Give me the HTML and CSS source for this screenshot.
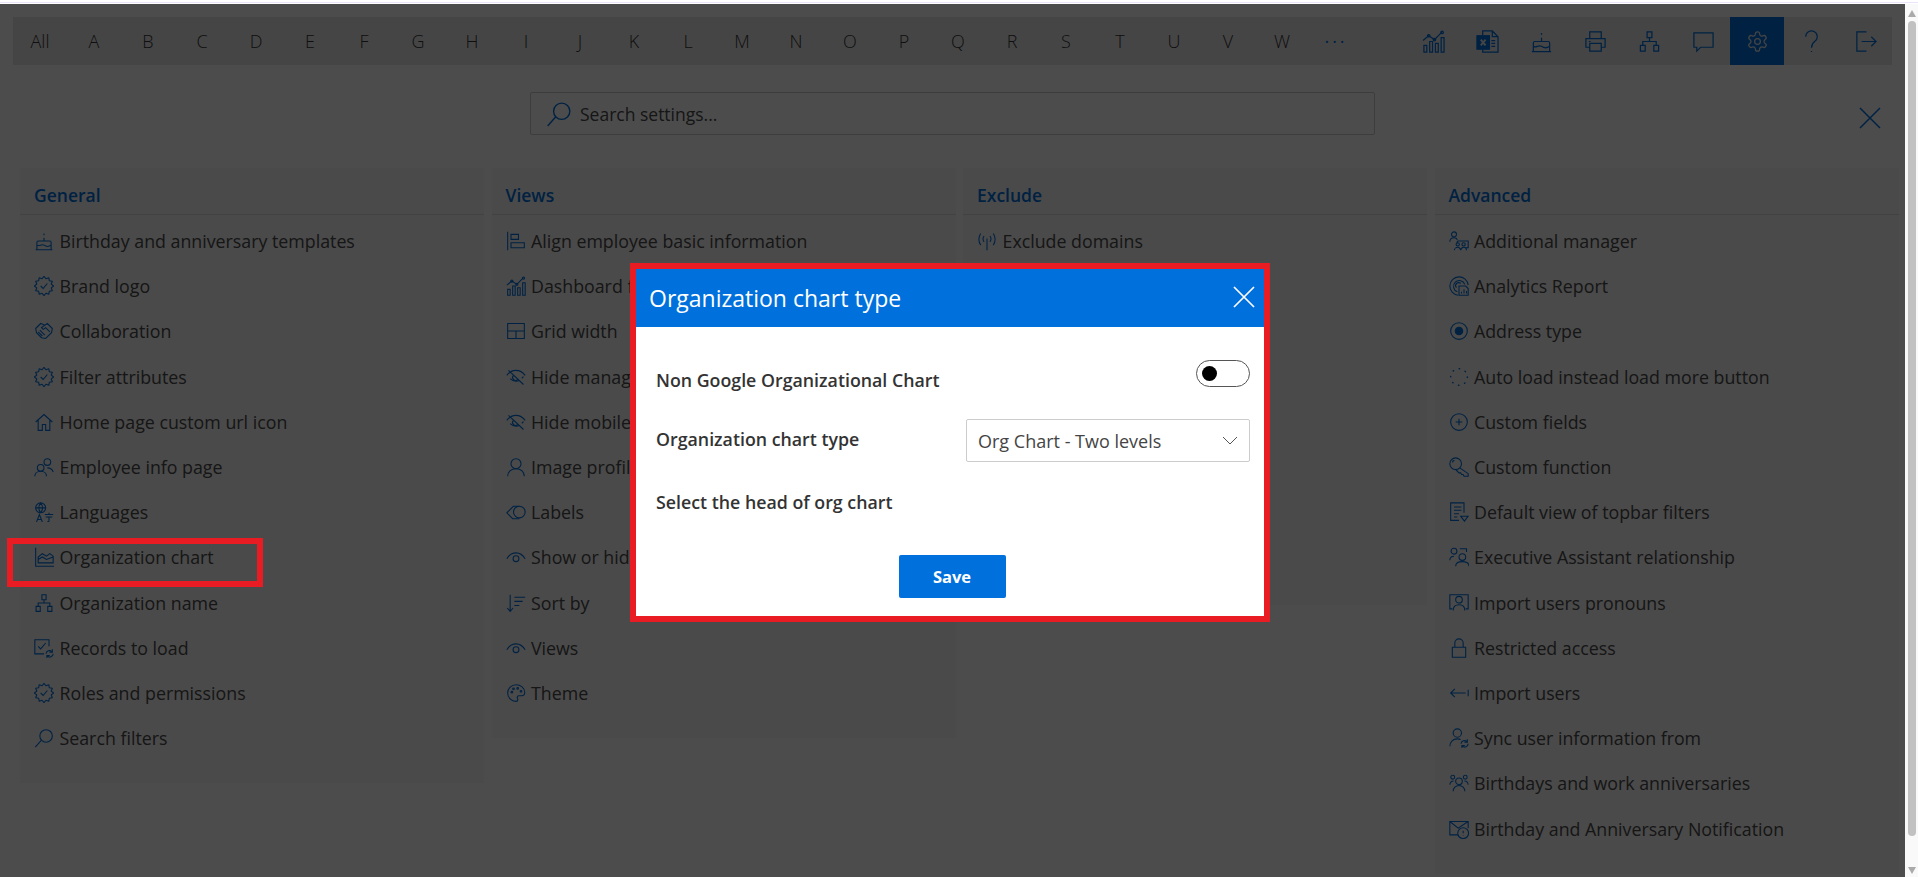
FILE: index.html
```html
<!DOCTYPE html>
<html lang="en">
<head>
  <meta charset="UTF-8">
  <title>Settings</title>
  <link rel="stylesheet" href="styles.css">
</head>
<body>
  <svg class="sprite" xmlns="http://www.w3.org/2000/svg">
    <symbol id="i-bars" viewBox="0 0 24 24"><path d="M2 23v-7h3v7zM8 23V12h3v11zM14 23v-9h3v9zM20 23V8h3v15zM1 11l6-5 6 4 8-8"/><circle cx="7" cy="6" r="1.3"/><circle cx="13" cy="10" r="1.3"/><circle cx="21" cy="2.500" r="1.300"/></symbol>
    <symbol id="i-excel" viewBox="0 0 24 24"><path d="M7 6V1h10l6 6v16H7v-3M17 1v6h6M16 11h4M16 14h4M16 17h4"/><rect x="1" y="6" width="13" height="14" fill="currentColor"/><path class="i-x" d="M5 10l5 6M10 10l-5 6"/></symbol>
    <symbol id="i-cake" viewBox="0 0 24 24"><path d="M2 22.500h20M3.500 22.500v-9a1.500 1.500 0 0 1 1.500-1.500h14a1.500 1.500 0 0 1 1.500 1.500v9M3.500 17c2.800 2 5.700-2 8.500 0s5.700 2 8.500 0M12 12V8M12 3v2"/></symbol>
    <symbol id="i-print" viewBox="0 0 24 24"><path d="M6 9V2h12v7M6 18H2V9h20v9h-4M6 14h12v8H6zM5 12h2"/></symbol>
    <symbol id="i-org" viewBox="0 0 24 24"><path d="M9.500 2h5v6h-5zM2.500 16h5v6h-5zM16.500 16h5v6h-5zM12 8v4M5 16v-4h14v4"/></symbol>
    <symbol id="i-chat" viewBox="0 0 24 24"><path d="M2 3h20v15H9l-4 4v-4H2z"/></symbol>
    <symbol id="i-gear" viewBox="0 0 24 24"><path d="M12.220 2h-.44a2 2 0 0 0-2 2v.18a2 2 0 0 1-1 1.730l-.43.25a2 2 0 0 1-2 0l-.15-.08a2 2 0 0 0-2.730.73l-.22.38a2 2 0 0 0 .73 2.730l.15.1a2 2 0 0 1 1 1.720v.51a2 2 0 0 1-1 1.740l-.15.09a2 2 0 0 0-.73 2.730l.22.38a2 2 0 0 0 2.730.73l.15-.08a2 2 0 0 1 2 0l.43.25a2 2 0 0 1 1 1.730V20a2 2 0 0 0 2 2h.44a2 2 0 0 0 2-2v-.18a2 2 0 0 1 1-1.730l.43-.25a2 2 0 0 1 2 0l.15.08a2 2 0 0 0 2.730-.73l.22-.39a2 2 0 0 0-.73-2.730l-.15-.08a2 2 0 0 1-1-1.740v-.5a2 2 0 0 1 1-1.740l.15-.09a2 2 0 0 0 .73-2.730l-.22-.38a2 2 0 0 0-2.730-.73l-.15.08a2 2 0 0 1-2 0l-.43-.25a2 2 0 0 1-1-1.730V4a2 2 0 0 0-2-2z"/><circle cx="12" cy="12" r="3"/></symbol>
    <symbol id="i-help" viewBox="0 0 24 24"><path d="M6 7a6 6 0 1 1 9.500 4.800c-2.300 1.800-3.500 3.500-3.500 6.700M12 22v1"/></symbol>
    <symbol id="i-out" viewBox="0 0 24 24"><path d="M13 2H3v20h10M8 12h15M18 7l5 5-5 5"/></symbol>
    <symbol id="i-search" viewBox="0 0 24 24"><circle cx="14.500" cy="9.500" r="7.500"/><path d="M9 14.500L1.500 23"/></symbol>
    <symbol id="i-badge" viewBox="0 0 24 24"><path class="i-round" d="M23.500 12L20.690 14.330 21.960 17.750 18.360 18.360 17.750 21.960 14.330 20.690 12 23.500 9.670 20.690 6.250 21.960 5.640 18.360 2.040 17.750 3.310 14.330.5 12 3.310 9.670 2.040 6.250 5.640 5.640 6.250 2.040 9.670 3.310 12 .5 14.330 3.310 17.750 2.040 18.360 5.640 21.960 6.250 20.690 9.670z"/><path d="M8 12l3 3 5-6"/></symbol>
    <symbol id="i-shake" viewBox="0 0 24 24"><path d="M2 9l6-6 5 2 3-2 6 6-1 5-7 7-5-1-6-6zM13 5L9 8l2 2 3-2 5 5M7 11l6 6M5 13l5 5"/></symbol>
    <symbol id="i-home" viewBox="0 0 24 24"><path d="M2 12l10-9 10 9M5 10v12h5v-7h4v7h5V10"/></symbol>
    <symbol id="i-people" viewBox="0 0 24 24"><circle cx="16" cy="6" r="4"/><circle cx="8" cy="13" r="4"/><path d="M1 23c0-3.500 3-6 7-6s7 2.500 7 6M16 13c3.500 0 6 1.500 7 5"/></symbol>
    <symbol id="i-lang" viewBox="0 0 24 24"><circle cx="8" cy="7" r="6"/><path d="M2 7h12M8 1c-3 4-3 8 0 12M8 1c3 4 3 8 0 12M3 24l3.500-9 3.500 9M4 21h5M13 15h10M18 13v2M14 18h8M18 18v5l-2 1"/></symbol>
    <symbol id="i-area" viewBox="0 0 24 24"><path d="M2 1v22h22M5 19v-7l5-4 5 3 4-3 4 3v8zM5 15l5-3 5 3 8-3"/></symbol>
    <symbol id="i-records" viewBox="0 0 24 24"><path d="M18 10V2H1v17h11M5 10l3 3 6-7M14.500 19a4 4 0 0 1 7-2.500M23 19a4 4 0 0 1-7 2.500M22 13.500v3.500h-3.500M15.500 24.500V21H19"/></symbol>
    <symbol id="i-align" viewBox="0 0 24 24"><path d="M2 1v22M6 4h9v6H6zM6 14h16v6H6z"/></symbol>
    <symbol id="i-grid" viewBox="0 0 24 24"><path d="M2 3h20v18H2zM2 12h20M12 12v9"/></symbol>
    <symbol id="i-eyeoff" viewBox="0 0 24 24"><path d="M1 10c3-4 7-6 11-6s8 2 11 6M5 14c2 2 4 3 7 3 1.500 0 3-.3 4-1M19 13.500l2-2M3 4l18 17"/><path d="M9 10a3.500 3.500 0 0 0 5 5"/></symbol>
    <symbol id="i-user" viewBox="0 0 24 24"><circle cx="12" cy="8" r="6"/><path d="M2 23c0-5 4-9 10-9s10 4 10 9"/></symbol>
    <symbol id="i-label" viewBox="0 0 24 24"><path d="M9 5L1 13l7 7h8M9 5h7"/><circle cx="16" cy="12" r="7"/></symbol>
    <symbol id="i-eye" viewBox="0 0 24 24"><path d="M1 14C4 9 8 7 12 7s8 2 11 7"/><circle cx="12" cy="14" r="3.500"/></symbol>
    <symbol id="i-sort" viewBox="0 0 24 24"><path d="M5 2v20M1.500 18L5 22l3.500-4M10 5h13M10 10h10M10 15h6"/></symbol>
    <symbol id="i-palette" viewBox="0 0 24 24"><path d="M12 2a10 10 0 1 0 0 20c1.600 0 2.200-1 2.200-2 0-1.200-.8-1.600-.8-2.700 0-1.100 1-2.100 2.100-2.100h3.300c1.900 0 3.700-1.200 3.700-3.700C22.500 6 17.500 2 12 2z"/><circle cx="7" cy="11" r="1"/><circle cx="9" cy="7" r="1"/><circle cx="14" cy="6.500" r="1"/><circle cx="18" cy="10" r="1"/></symbol>
    <symbol id="i-antenna" viewBox="0 0 24 24"><path d="M12 9v14M8.500 6c-1.500 2-1.500 5 0 7M15.500 6c1.500 2 1.500 5 0 7M4.500 3c-3 4-3 10 0 14M19.500 3c3 4 3 10 0 14"/></symbol>
    <symbol id="i-addmgr" viewBox="0 0 24 24"><circle cx="6" cy="4" r="3"/><path d="M1 13c0-3 2-5 5-5 2 0 3.500 1 4 2.500M10 12h13v8H20M10 12v3"/><circle cx="10.500" cy="16" r="2"/><circle cx="17.500" cy="16" r="2"/><path d="M6.500 23c0-2 2-3.500 4-3.500s3 1.500 3.500 3.500c.5-2 1.500-3.500 3.500-3.500s3.500 1.500 3.500 3.500"/></symbol>
    <symbol id="i-report" viewBox="0 0 24 24"><path d="M11 23A11 11 0 1 1 23 11M10 19A7 7 0 1 1 19 10M9 14a3.500 3.500 0 0 1 5-5"/><path d="M12 12h8l3 3v8H12zM15 21v-2M18 21v-5M21 21v-3"/></symbol>
    <symbol id="i-radio" viewBox="0 0 24 24"><circle cx="12" cy="12" r="10"/><circle class="i-dot" cx="12" cy="12" r="4.500"/></symbol>
    <symbol id="i-loader" viewBox="0 0 24 24"><circle class="i-dash" cx="12" cy="12" r="10"/></symbol>
    <symbol id="i-plus" viewBox="0 0 24 24"><circle cx="12" cy="12" r="10"/><path d="M12 8v8M8 12h8"/></symbol>
    <symbol id="i-key" viewBox="0 0 24 24"><circle cx="8" cy="8" r="7"/><path d="M4.500 6.500a1.500 1.500 0 0 1 2-2M13 13l10 7v3h-5l-1-2h-2l-1-2h-2l-4-4"/></symbol>
    <symbol id="i-filter" viewBox="0 0 24 24"><path d="M18 13V1H2v21h10M6 6h9M6 10h9M6 14h6M6 18h4M14 17h9l-4.500 6z"/></symbol>
    <symbol id="i-exec" viewBox="0 0 24 24"><circle cx="6" cy="5" r="3.500"/><circle cx="16" cy="12" r="4"/><path d="M1 16c0-3 2-5 5-5M8 23c0-3.500 3-5.500 8-5.500s8 2 8 5.500M13 2h8v4"/></symbol>
    <symbol id="i-screen" viewBox="0 0 24 24"><path d="M4 19H1V2h22v17h-3"/><circle cx="12" cy="8" r="4"/><path d="M5 21c0-4.500 3-7 7-7s7 2.500 7 7"/></symbol>
    <symbol id="i-lock" viewBox="0 0 24 24"><path d="M4 11h16v12H4zM7 11V6a5 5 0 0 1 10 0v5"/></symbol>
    <symbol id="i-import" viewBox="0 0 24 24"><path d="M23 8v8M2 12h18M7 7l-5 5 5 5"/></symbol>
    <symbol id="i-sync" viewBox="0 0 24 24"><circle cx="10" cy="6" r="5"/><path d="M1 22c0-5 3.500-9 9-9 1.500 0 3 .3 4 1M14.500 19a4 4 0 0 1 7-2.500M23 19a4 4 0 0 1-7 2.500M22 13.500v3.500h-3.500M15.500 24.500V21H19"/></symbol>
    <symbol id="i-group" viewBox="0 0 24 24"><circle cx="4.500" cy="5" r="2.300"/><circle cx="19.500" cy="5" r="2.300"/><circle cx="12" cy="10" r="4"/><path d="M1 14c.500-3 2-4.500 4.500-4.500M23 14c-.5-3-2-4.500-4.500-4.500M5 22c0-4 3-7 7-7s7 3 7 7"/></symbol>
    <symbol id="i-mail" viewBox="0 0 24 24"><path d="M11 19H1V3h22v8M1 3l10 8L23 3"/><circle cx="17" cy="17" r="6.500"/><path d="M17 14v3M17 19.500v.5"/></symbol>
  </svg>

  <div class="strip"></div>

  <div class="window">
    <main class="page">
      <nav class="topbar">
        <ul class="letters">
          <li>All</li><li>A</li><li>B</li><li>C</li><li>D</li><li>E</li><li>F</li><li>G</li><li>H</li><li>I</li><li>J</li><li>K</li><li>L</li><li>M</li><li>N</li><li>O</li><li>P</li><li>Q</li><li>R</li><li>S</li><li>T</li><li>U</li><li>V</li><li>W</li>
          <li class="more">&middot;&middot;&middot;</li>
        </ul>
        <div class="tools">
          <a class="tool"><svg><use href="#i-bars"/></svg></a>
          <a class="tool"><svg><use href="#i-excel"/></svg></a>
          <a class="tool"><svg><use href="#i-cake"/></svg></a>
          <a class="tool"><svg><use href="#i-print"/></svg></a>
          <a class="tool"><svg><use href="#i-org"/></svg></a>
          <a class="tool"><svg><use href="#i-chat"/></svg></a>
          <a class="tool active"><svg><use href="#i-gear"/></svg></a>
          <a class="tool"><svg><use href="#i-help"/></svg></a>
          <a class="tool"><svg><use href="#i-out"/></svg></a>
        </div>
      </nav>

      <div class="search-row">
        <div class="search">
          <svg class="search-icon"><use href="#i-search"/></svg>
          <span>Search settings...</span>
        </div>
        <svg class="close-page" viewBox="0 0 22 22"><path d="M1 1l20 20M21 1L1 21"/></svg>
      </div>

      <div class="columns">
        <section class="panel">
          <h2>General</h2>
          <ul class="items">
            <li><svg><use href="#i-cake"/></svg>Birthday and anniversary templates</li>
            <li><svg><use href="#i-badge"/></svg>Brand logo</li>
            <li><svg><use href="#i-shake"/></svg>Collaboration</li>
            <li><svg><use href="#i-badge"/></svg>Filter attributes</li>
            <li><svg><use href="#i-home"/></svg>Home page custom url icon</li>
            <li><svg><use href="#i-people"/></svg>Employee info page</li>
            <li><svg><use href="#i-lang"/></svg>Languages</li>
            <li><svg><use href="#i-area"/></svg>Organization chart</li>
            <li><svg><use href="#i-org"/></svg>Organization name</li>
            <li><svg><use href="#i-records"/></svg>Records to load</li>
            <li><svg><use href="#i-badge"/></svg>Roles and permissions</li>
            <li><svg><use href="#i-search"/></svg>Search filters</li>
          </ul>
        </section>
        <section class="panel">
          <h2>Views</h2>
          <ul class="items">
            <li><svg><use href="#i-align"/></svg>Align employee basic information</li>
            <li><svg><use href="#i-bars"/></svg>Dashboard filters</li>
            <li><svg><use href="#i-grid"/></svg>Grid width</li>
            <li><svg><use href="#i-eyeoff"/></svg>Hide manager</li>
            <li><svg><use href="#i-eyeoff"/></svg>Hide mobile</li>
            <li><svg><use href="#i-user"/></svg>Image profile</li>
            <li><svg><use href="#i-label"/></svg>Labels</li>
            <li><svg><use href="#i-eye"/></svg>Show or hide</li>
            <li><svg><use href="#i-sort"/></svg>Sort by</li>
            <li><svg><use href="#i-eye"/></svg>Views</li>
            <li><svg><use href="#i-palette"/></svg>Theme</li>
          </ul>
        </section>
        <section class="panel panel-short">
          <h2>Exclude</h2>
          <ul class="items">
            <li><svg><use href="#i-antenna"/></svg>Exclude domains</li>
          </ul>
        </section>
        <section class="panel">
          <h2>Advanced</h2>
          <ul class="items">
            <li><svg><use href="#i-addmgr"/></svg>Additional manager</li>
            <li><svg><use href="#i-report"/></svg>Analytics Report</li>
            <li><svg><use href="#i-radio"/></svg>Address type</li>
            <li><svg><use href="#i-loader"/></svg>Auto load instead load more button</li>
            <li><svg><use href="#i-plus"/></svg>Custom fields</li>
            <li><svg><use href="#i-key"/></svg>Custom function</li>
            <li><svg><use href="#i-filter"/></svg>Default view of topbar filters</li>
            <li><svg><use href="#i-exec"/></svg>Executive Assistant relationship</li>
            <li><svg><use href="#i-screen"/></svg>Import users pronouns</li>
            <li><svg><use href="#i-lock"/></svg>Restricted access</li>
            <li><svg><use href="#i-import"/></svg>Import users</li>
            <li><svg><use href="#i-sync"/></svg>Sync user information from</li>
            <li><svg><use href="#i-group"/></svg>Birthdays and work anniversaries</li>
            <li><svg><use href="#i-mail"/></svg>Birthday and Anniversary Notification</li>
          </ul>
        </section>
      </div>

      <div class="backdrop"></div>
      <div class="highlight"></div>

      <div class="modal">
        <header class="modal-head">
          <span>Organization chart type</span>
          <svg class="modal-close" viewBox="0 0 22 22"><path d="M1 1l20 20M21 1L1 21"/></svg>
        </header>
        <div class="modal-body">
          <div class="field field-toggle">
            <label>Non Google Organizational Chart</label>
            <span class="toggle"><span class="knob"></span></span>
          </div>
          <div class="field field-select">
            <label>Organization chart type</label>
            <div class="select">
              <span>Org Chart - Two levels</span>
              <svg viewBox="0 0 16 9"><path d="M1 1l7 7 7-7"/></svg>
            </div>
          </div>
          <div class="field field-head">
            <label>Select the head of org chart</label>
          </div>
          <button class="save">Save</button>
        </div>
      </div>
    </main>

    <aside class="scrollbar">
      <span class="arrow-up"></span>
      <span class="thumb"></span>
      <span class="arrow-down"></span>
    </aside>
  </div>
</body>
</html>
```

FILE: styles.css
```css
* {
  box-sizing: border-box;
}

html,
body {
  margin: 0;
  height: 100%;
  overflow: hidden;
}

body {
  font-family: "Open Sans", "Noto Sans", sans-serif;
  background: #fff;
  color: #4a4a4a;
  display: flex;
  flex-direction: column;
}

ul {
  list-style: none;
  margin: 0;
  padding: 0;
}

svg {
  fill: none;
  stroke: currentColor;
  stroke-width: 1.3;
}

.sprite {
  display: none;
}

.i-x {
  stroke: #e6e6e6;
  stroke-width: 2;
}

.i-dot {
  fill: currentColor;
}

.i-round {
  stroke-linejoin: round;
}

.i-dash {
  stroke-width: 1.8;
  stroke-linecap: round;
  stroke-dasharray: 0.5 7.35;
}

.strip {
  height: 4px;
  border-top: 2px solid #fff;
  border-bottom: 1px solid #fff;
  background: #ece4f8;
  flex: none;
}

.window {
  flex: 1;
  display: flex;
  min-height: 0;
}

.page {
  position: relative;
  width: 1905px;
  flex: none;
  background: #fff;
  overflow: hidden;
  padding: 13px 13px 0 13px;
}

/* top bar */
.topbar {
  height: 48px;
  width: 1879px;
  background: #e8e8e8;
  display: flex;
  justify-content: space-between;
}

.letters {
  display: flex;
}

.letters li {
  width: 54px;
  line-height: 48px;
  text-align: center;
  font-size: 18px;
  font-weight: 300;
  color: #333;
}

.letters .more {
  color: #0070dd;
  font-weight: 400;
  letter-spacing: 3px;
}

.tools {
  display: flex;
}

.tool {
  width: 54px;
  height: 48px;
  color: #0070dd;
  display: flex;
  align-items: center;
  justify-content: center;
}

.tool svg {
  width: 23px;
  height: 23px;
}

.tool.active {
  background: #0070dd;
  color: #e6e6e6;
}

/* search */
.search-row {
  position: relative;
  height: 103px;
  padding-top: 27px;
  padding-left: 517px;
}

.search {
  width: 845px;
  height: 43px;
  border: 1px solid #ccc;
  border-radius: 2px;
  display: flex;
  align-items: center;
  padding-left: 15px;
  font-size: 17.5px;
  gap: 8px;
}

.search-icon {
  width: 26px;
  height: 26px;
  color: #0070dd;
}

.close-page {
  position: absolute;
  top: 42px;
  right: 11px;
  width: 22px;
  height: 22px;
  color: #0070dd;
  stroke-width: 1.5;
}

/* columns */
.columns {
  display: flex;
  gap: 7.5px;
  align-items: flex-start;
  margin-left: 7px;
}

.panel {
  width: 464px;
  flex: none;
  background: #f7f7f7;
}

.panel-short {
  height: 437px;
}

.panel h2 {
  margin: 0;
  height: 47px;
  padding: 13px 0 0 14px;
  font-size: 17.5px;
  line-height: 28px;
  font-weight: 600;
  color: #0070dd;
  border-bottom: 1px solid #ddd;
}

.items {
  padding: 3.5px 0 22.5px;
}

.items li {
  height: 45.2px;
  display: flex;
  align-items: center;
  padding-left: 14px;
  font-size: 17.8px;
  white-space: nowrap;
}

.items svg {
  width: 20px;
  height: 20px;
  margin-right: 5.5px;
  color: #0070dd;
  flex: none;
}

/* dimmed layer and what sits over it */
.backdrop {
  position: absolute;
  inset: 0;
  background: rgba(0, 0, 0, 0.7);
}

.highlight {
  position: absolute;
  left: 7px;
  top: 534px;
  width: 256px;
  height: 49px;
  border: 6px solid #e91c24;
}

.modal {
  position: absolute;
  left: 630px;
  top: 259px;
  width: 640px;
  height: 359px;
  border: 6px solid #e91c24;
  background: #fff;
  color: #333;
}

.modal-head {
  height: 58px;
  background: #0070dd;
  color: #fff;
  font-size: 23px;
  display: flex;
  align-items: center;
  justify-content: space-between;
  padding: 0 9px 0 13px;
}

.modal-close {
  width: 22px;
  height: 22px;
  stroke-width: 1.7;
  margin-bottom: 3px;
}

.modal-body {
  padding: 0 14px 0 20px;
}

.field {
  display: flex;
  align-items: center;
  justify-content: space-between;
}

.field label {
  font-size: 17.8px;
  font-weight: 600;
}

.field-toggle {
  height: 33px;
  margin-top: 33px;
  align-items: flex-start;
}

.field-toggle label {
  margin-top: 8px;
}

.toggle {
  width: 54px;
  height: 27px;
  border: 1px solid #555;
  border-radius: 14px;
  display: flex;
  align-items: center;
  padding-left: 5px;
}

.knob {
  width: 15px;
  height: 15px;
  border-radius: 50%;
  background: #000;
}

.field-select {
  height: 43px;
  margin-top: 26px;
}

.field-select label {
  margin-bottom: 3px;
}

.select {
  width: 284px;
  height: 43px;
  border: 1px solid #ccc;
  border-radius: 2px;
  display: flex;
  align-items: center;
  justify-content: space-between;
  padding: 0 11px 0 11px;
  font-size: 18px;
  color: #444;
}

.select svg {
  width: 16px;
  height: 9px;
  stroke: #555;
  stroke-width: 1;
}

.field-head {
  height: 24px;
  margin-top: 28px;
}

.save {
  display: block;
  width: 107px;
  height: 43px;
  margin: 41px auto 0 auto;
  position: relative;
  left: -1px;
  border: none;
  border-radius: 2px;
  background: #0070dd;
  color: #fff;
  font-family: inherit;
  font-size: 16.5px;
  font-weight: 700;
}

/* scrollbar */
.scrollbar {
  width: 13px;
  flex: none;
  background: #f9f9f9;
  display: flex;
  flex-direction: column;
  align-items: center;
  padding: 6px 0 3px;
}

.arrow-up,
.arrow-down {
  width: 0;
  height: 0;
  border-left: 4px solid transparent;
  border-right: 4px solid transparent;
}

.arrow-up {
  border-bottom: 7px solid #aaa;
}

.arrow-down {
  border-top: 7px solid #aaa;
}

.thumb {
  width: 8px;
  height: 815px;
  margin: 4px 0 auto 0;
  background: #c1c1c1;
  border-radius: 4px;
}
```
